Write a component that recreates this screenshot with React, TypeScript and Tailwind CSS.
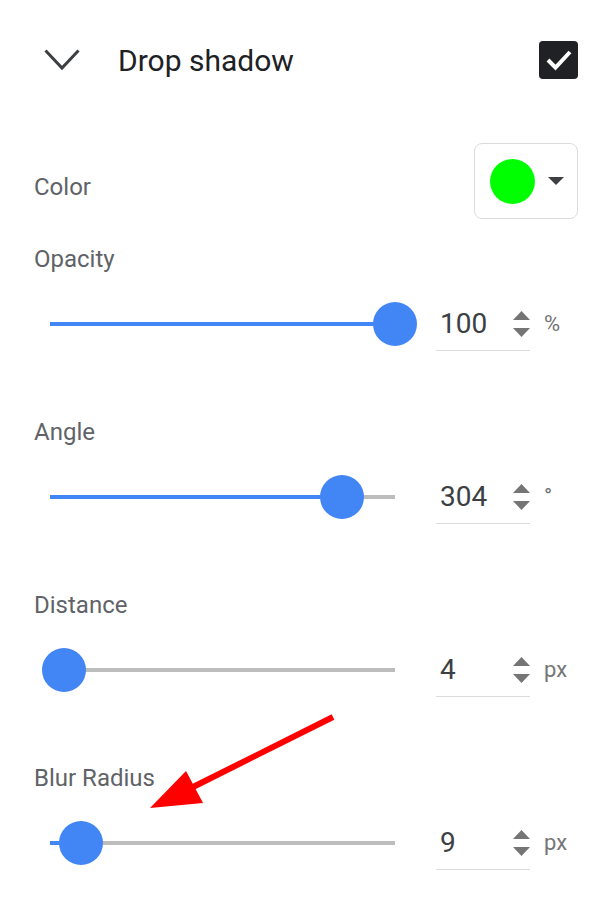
import React from 'react';

interface SliderRowProps {
  label: string;
  value: number;
  max: number;
  unit: string;
}

const TRACK = 345;

const SliderRow: React.FC<SliderRowProps> = ({ label, value, max, unit }) => {
  const pos = (value / max) * TRACK;
  return (
    <div>
      <div className="h-[28px] text-[24px] leading-[28px] text-[#5f6368]">{label}</div>
      <div className="mt-[24px] flex h-[54px] items-center">
        <div className="relative ml-[16px] h-[4px] w-[345px] bg-[#bdbdbd]">
          <div className="absolute left-0 top-0 h-[4px] bg-[#4285f4]" style={{ width: pos }} />
          <div
            className="absolute top-1/2 h-[44px] w-[44px] -translate-x-1/2 -translate-y-1/2 rounded-full bg-[#4285f4]"
            style={{ left: pos }}
          />
        </div>
        <div className="ml-[41px] flex h-[54px] w-[94px] items-center border-b border-[#dadce0] pl-[4px]">
          <span className="flex-1 text-[28px] leading-none text-[#3c4043]">{value}</span>
          <div className="flex flex-col items-center gap-[8px]">
            <svg width="17" height="9" viewBox="0 0 17 9">
              <path d="M8.5 0 L17 9 L0 9 Z" fill="#757575" />
            </svg>
            <svg width="17" height="9" viewBox="0 0 17 9">
              <path d="M0 0 L17 0 L8.5 9 Z" fill="#757575" />
            </svg>
          </div>
        </div>
        <span className="ml-[14px] text-[22px] leading-none text-[#757575]">{unit}</span>
      </div>
    </div>
  );
};

export default function App() {
  return (
    <div className="relative h-[910px] w-[600px] overflow-hidden bg-white font-['Roboto',sans-serif]">
      <div className="pl-[34px] pr-[22px]">
        {/* header */}
        <div className="flex h-[120px] items-center">
          <svg className="ml-[10px]" width="36" height="22" viewBox="0 0 36 22">
            <path d="M1.5 1.5 L18 19 L34.5 1.5" fill="none" stroke="#3c4043" strokeWidth="3" />
          </svg>
          <span className="ml-[38px] text-[30px] text-[#202124]">Drop shadow</span>
          <div className="ml-auto flex h-[38px] w-[39px] items-center justify-center rounded-[4px] bg-[#202124]">
            <svg width="28" height="24" viewBox="0 0 28 24">
              <path d="M3 12 L10.5 19.5 L25 4" fill="none" stroke="white" strokeWidth="4" />
            </svg>
          </div>
        </div>

        {/* color */}
        <div className="mt-[23px] flex h-[76px] items-center justify-between">
          <span className="pt-[11px] text-[24px] leading-[28px] text-[#5f6368]">Color</span>
          <button className="flex h-[76px] w-[104px] items-center rounded-[8px] border border-[#dadce0] pl-[15px]">
            <span className="h-[45px] w-[45px] rounded-full bg-[#00ff00]" />
            <svg className="ml-[13px]" width="16" height="8" viewBox="0 0 16 8">
              <path d="M0 0 L16 0 L8 8 Z" fill="#3c4043" />
            </svg>
          </button>
        </div>

        {/* sliders */}
        <div className="mt-[26px] flex flex-col gap-[67px]">
          <SliderRow label="Opacity" value={100} max={100} unit="%" />
          <SliderRow label="Angle" value={304} max={359} unit="°" />
          <SliderRow label="Distance" value={4} max={100} unit="px" />
          <SliderRow label="Blur Radius" value={9} max={100} unit="px" />
        </div>
      </div>

      {/* annotation arrow */}
      <svg className="pointer-events-none absolute left-0 top-0" width="600" height="910" viewBox="0 0 600 910">
        <line x1="333" y1="717" x2="185" y2="791" stroke="#ff0000" strokeWidth="6" />
        <path d="M150 808 L186 771 L203 803 Z" fill="#ff0000" />
      </svg>
    </div>
  );
}
